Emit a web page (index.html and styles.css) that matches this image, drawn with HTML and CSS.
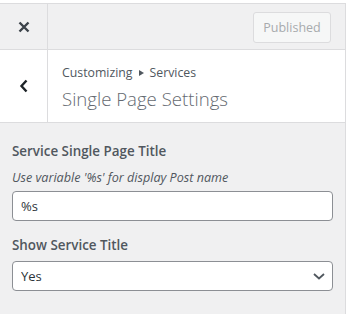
FILE: index.html
```html
<!DOCTYPE html>
<html lang="en">
<head>
    <meta charset="UTF-8">
    <meta name="viewport" content="width=device-width, initial-scale=1.0">
    <title>Customizer - Single Page Settings</title>
    <link rel="stylesheet" href="styles.css">
</head>
<body>
    <div class="panel">
        <div class="header">
            <button class="close-btn" aria-label="Close">
                <svg width="12" height="12" viewBox="0 0 12 12">
                    <path d="M1.5 1.5 L10.5 10.5 M10.5 1.5 L1.5 10.5" stroke="#3c434a" stroke-width="2.4" fill="none"/>
                </svg>
            </button>
            <div class="header-actions">
                <button class="publish-btn" disabled>Published</button>
            </div>
        </div>

        <div class="info">
            <button class="back-btn" aria-label="Back">
                <svg width="10" height="14" viewBox="0 0 10 14">
                    <path d="M7.5 1.5 L2.5 7 L7.5 12.5" stroke="#1d2327" stroke-width="2.4" fill="none"/>
                </svg>
            </button>
            <div class="info-title">
                <div class="crumbs">
                    Customizing
                    <span class="crumb-arrow"></span>
                    Services
                </div>
                <h3>Single Page Settings</h3>
            </div>
        </div>

        <div class="controls">
            <div class="control">
                <label class="control-title" for="pageTitle">Service Single Page Title</label>
                <p class="control-desc">Use variable '%s' for display Post name</p>
                <input type="text" id="pageTitle" class="text-input" value="%s">
            </div>

            <div class="control">
                <label class="control-title" for="showTitle">Show Service Title</label>
                <div class="select-wrap">
                    <select id="showTitle" class="select-input">
                        <option>Yes</option>
                        <option>No</option>
                    </select>
                    <svg class="select-arrow" width="12" height="7" viewBox="0 0 12 7">
                        <path d="M1 1 L6 5.5 L11 1" stroke="#50575e" stroke-width="1.8" fill="none"/>
                    </svg>
                </div>
            </div>
        </div>
    </div>
</body>
</html>
```

FILE: styles.css
```css
body {
    margin: 0;
    background-color: white;
    font-family: "Open Sans", "Noto Sans", sans-serif;
    color: #50575e;
}

.panel {
    width: 345px;
    height: 311px;
    margin-top: 3px;
    background-color: #f0f0f1;
    border-top: 1px solid #dcdcde;
    border-right: 1px solid #dcdcde;
}

/* top bar */
.header {
    display: flex;
    height: 45px;
    border-bottom: 1px solid #dcdcde;
}

.close-btn {
    width: 48px;
    height: 45px;
    padding: 0;
    border: none;
    border-right: 1px solid #dcdcde;
    background: none;
    display: flex;
    align-items: center;
    justify-content: center;
    cursor: pointer;
}

.header-actions {
    flex: 1;
    display: flex;
    align-items: center;
    justify-content: flex-end;
    padding-right: 14px;
}

.publish-btn {
    width: 78px;
    height: 31px;
    margin-top: 1px;
    font-family: inherit;
    font-size: 12.5px;
    color: #a7aaad;
    background-color: #f6f7f7;
    border: 1px solid #dcdcde;
    border-radius: 3px;
}

/* panel title */
.info {
    display: flex;
    height: 72px;
    background-color: white;
    border-bottom: 1px solid #dcdcde;
}

.back-btn {
    width: 48px;
    padding: 0;
    border: none;
    border-right: 1px solid #dcdcde;
    background: none;
    display: flex;
    align-items: center;
    justify-content: center;
    cursor: pointer;
}

.info-title {
    padding: 14px 0 0 14px;
}

.crumbs {
    font-size: 12.3px;
    line-height: 18px;
    height: 18px;
    color: #50575e;
    display: flex;
    align-items: center;
    gap: 6px;
}

.crumb-arrow {
    width: 0;
    height: 0;
    border-top: 3px solid transparent;
    border-bottom: 3px solid transparent;
    border-left: 5px solid #50575e;
}

.info-title h3 {
    margin: 4px 0 0;
    font-size: 18.6px;
    line-height: 26px;
    font-weight: 300;
    color: #646970;
}

/* controls */
.controls {
    padding: 18px 12px 0;
}

.control {
    margin-bottom: 14px;
}

.control-title {
    display: block;
    font-size: 13.4px;
    line-height: 20px;
    font-weight: 600;
    color: #50575e;
}

.control-desc {
    margin: 8px 0 4px;
    font-size: 12.6px;
    line-height: 18px;
    font-style: italic;
    color: #50575e;
}

.text-input {
    box-sizing: border-box;
    width: 100%;
    height: 30px;
    margin: 0;
    padding: 0 8px;
    font-family: inherit;
    font-size: 13px;
    color: #2c3338;
    background-color: white;
    border: 1px solid #8c8f94;
    border-radius: 4px;
}

.select-wrap {
    position: relative;
    margin-top: 6px;
}

.select-input {
    display: block;
    box-sizing: border-box;
    width: 100%;
    height: 30px;
    padding: 0 24px 0 8px;
    font-family: inherit;
    font-size: 13px;
    color: #2c3338;
    background-color: white;
    border: 1px solid #8c8f94;
    border-radius: 4px;
    appearance: none;
}

.select-arrow {
    position: absolute;
    right: 8px;
    top: 12px;
    pointer-events: none;
}
```
